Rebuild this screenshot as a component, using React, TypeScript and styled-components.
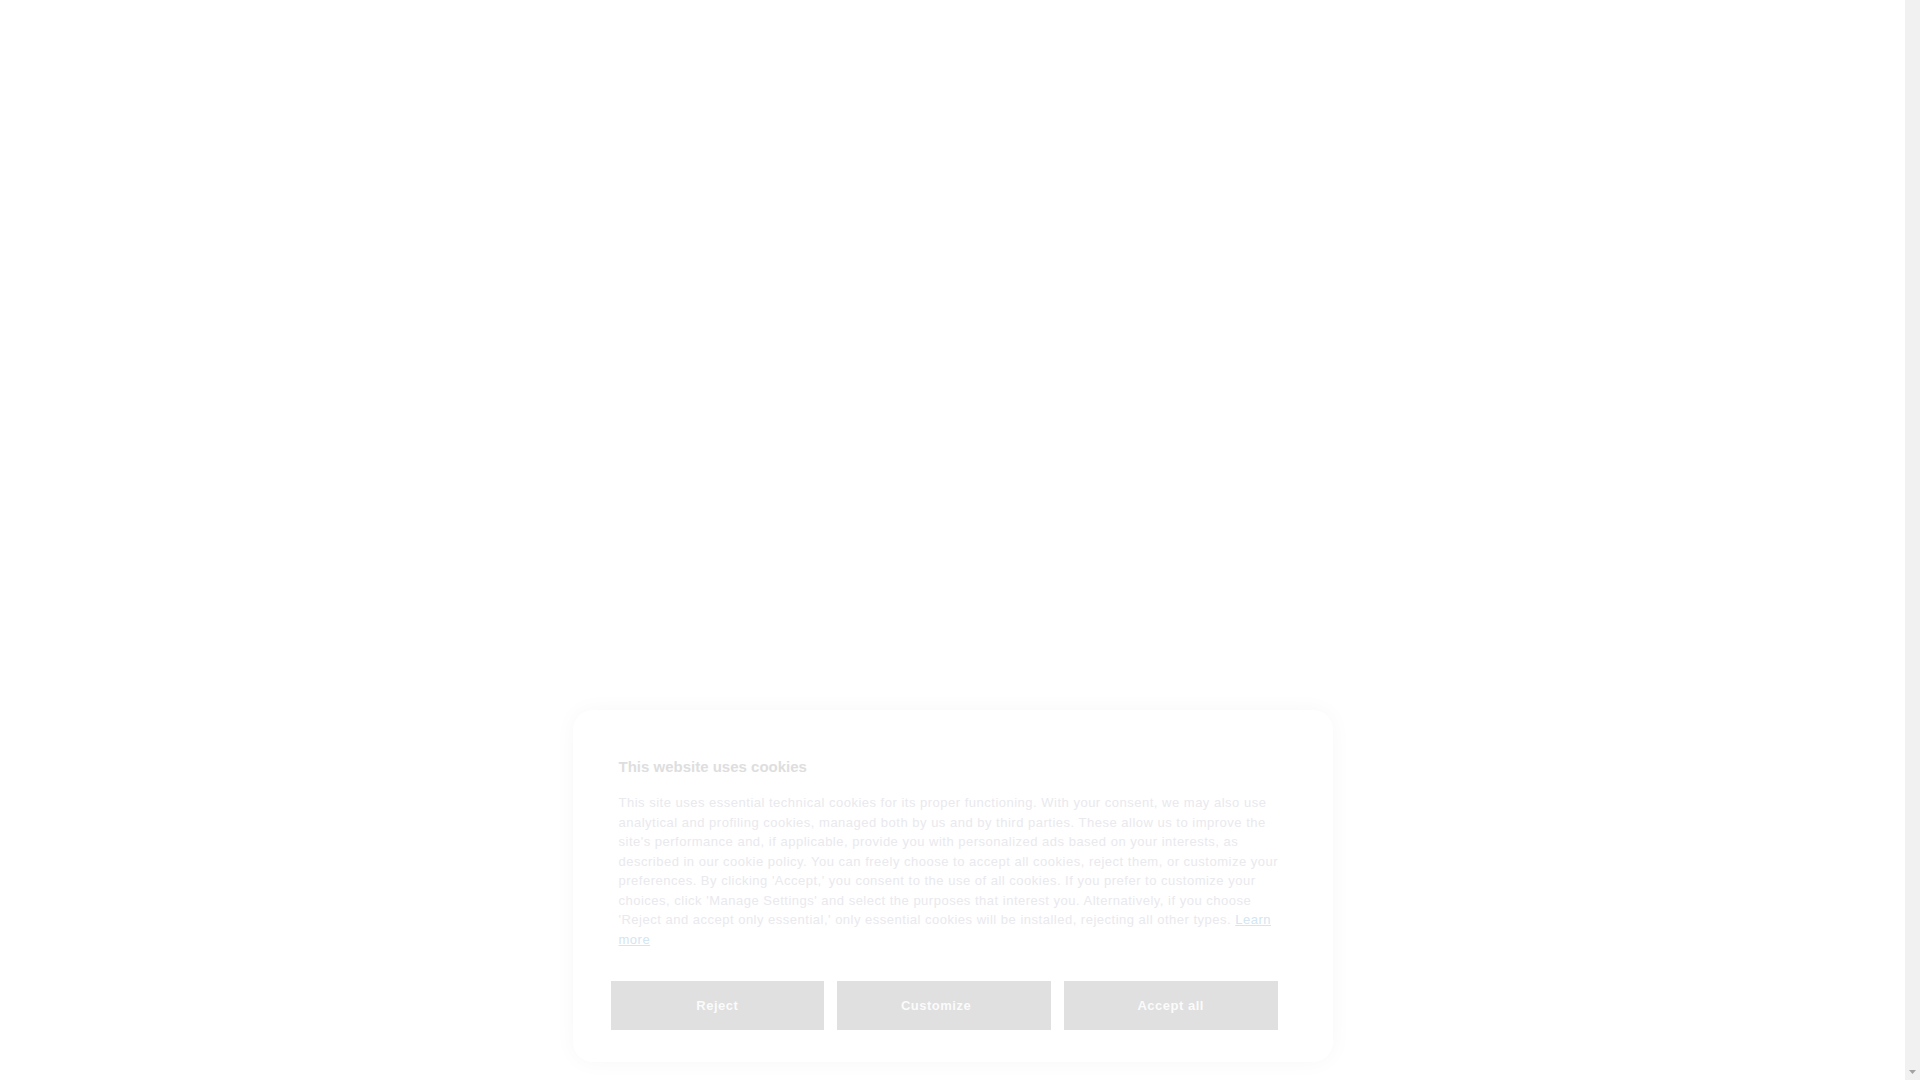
import React from "react";
import styled, { createGlobalStyle } from "styled-components";

const GlobalStyle = createGlobalStyle`
  body {
    margin: 0;
    background: #ffffff;
    font-family: "Liberation Sans", Arial, sans-serif;
    overflow: hidden;
  }
`;

const Page = styled.div`
  display: grid;
  grid-template-columns: 1fr 15px;
  height: 100vh;
  background: #ffffff;
`;

const Content = styled.main`
  display: flex;
  flex-direction: column;
  justify-content: flex-end;
  align-items: center;
  padding-bottom: 18px;
`;

const ScrollTrack = styled.div`
  display: flex;
  flex-direction: column;
  justify-content: flex-end;
  align-items: center;
  background: #f1f1f1;
  padding-bottom: 6px;
`;

const Banner = styled.section`
  width: 760px;
  box-sizing: border-box;
  padding: 48px 46px 32px;
  background: #ffffff;
  border-radius: 20px;
  box-shadow: 0 0 22px rgba(0, 0, 0, 0.035);
`;

const Title = styled.h2`
  margin: 0 0 18px;
  font-size: 15px;
  line-height: 17px;
  font-weight: 700;
  color: #dedede;
`;

const Text = styled.p`
  margin: 0;
  font-size: 13px;
  line-height: 19.5px;
  letter-spacing: 0.5px;
  color: #e9e9ee;
`;

const MoreLink = styled.a`
  color: #d3e6f1;
  text-decoration: underline;
`;

const Actions = styled.div`
  display: flex;
  gap: 13px;
  width: 667px;
  margin: 32px 0 0 -8px;
`;

const Action = styled.button<{ $shift?: boolean }>`
  flex: 1;
  height: 49px;
  padding: 0;
  border: none;
  border-radius: 0;
  background: #e0e0e0;
  color: #fbfbfb;
  font-family: "Liberation Sans", Arial, sans-serif;
  font-size: 13px;
  font-weight: 700;
  letter-spacing: 0.5px;
  text-indent: ${(p) => (p.$shift ? "-16px" : "0")};
  cursor: pointer;
`;

const actions = [
  { label: "Reject" },
  { label: "Customize", shift: true },
  { label: "Accept all" },
];

export default function App() {
  return (
    <>
      <GlobalStyle />
      <Page>
        <Content>
          <Banner>
            <Title>This website uses cookies</Title>
            <Text>
              This site uses essential technical cookies for its proper functioning. With your consent, we may also use
              analytical and profiling cookies, managed both by us and by third parties. These allow us to improve the
              site's performance and, if applicable, provide you with personalized ads based on your interests, as
              described in our cookie policy. You can freely choose to accept all cookies, reject them, or customize
              your preferences. By clicking 'Accept,' you consent to the use of all cookies. If you prefer to customize
              your choices, click 'Manage Settings' and select the purposes that interest you. Alternatively, if you
              choose 'Reject and accept only essential,' only essential cookies will be installed, rejecting all other
              types. <MoreLink href="#">Learn more</MoreLink>
            </Text>
            <Actions>
              {actions.map((a) => (
                <Action key={a.label} $shift={a.shift}>
                  {a.label}
                </Action>
              ))}
            </Actions>
          </Banner>
        </Content>
        <ScrollTrack>
          <svg width="7" height="4" viewBox="0 0 7 4">
            <path d="M0 0 H7 L3.5 4 Z" fill="#a3a3a3" />
          </svg>
        </ScrollTrack>
      </Page>
    </>
  );
}
